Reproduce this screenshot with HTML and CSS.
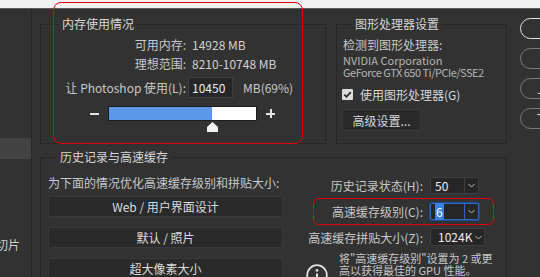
FILE: index.html
```html
<!DOCTYPE html>
<html lang="zh-CN">
<head>
  <meta charset="UTF-8" />
  <meta name="viewport" content="width=device-width, initial-scale=1.0" />
  <title>首选项 - 性能</title>
  <link rel="stylesheet" href="styles.css">
</head>
<body>
  <!-- window title strip -->
  <div class="topstrip"></div>

  <div class="dialog">
    <!-- category list (mostly scrolled off to the left) -->
    <aside class="sidebar">
      <div class="nav">
        <div class="nav-item"></div>
        <div class="nav-item"></div>
        <div class="nav-item"></div>
        <div class="nav-item"></div>
        <div class="nav-item"></div>
        <div class="nav-item"></div>
        <div class="nav-item"></div>
        <div class="nav-item active"></div>
        <div class="nav-item"></div>
        <div class="nav-item"></div>
        <div class="nav-item"></div>
        <div class="nav-item"></div>
        <div class="nav-item">切片</div>
        <div class="nav-item"></div>
      </div>
    </aside>

    <main class="prefs">
      <div class="top-row">
        <fieldset class="group memory">
          <legend>内存使用情况</legend>
          <div class="stats">
            <span class="label">可用内存:</span><span class="value">14928 MB</span>
            <span class="label">理想范围:</span><span class="value">8210-10748 MB</span>
          </div>
          <div class="use-row">
            <span class="label">让 Photoshop 使用(L):</span>
            <input class="num-input" type="text" value="10450" />
            <span class="unit">MB(69%)</span>
          </div>
          <div class="slider-row">
            <span class="minus"></span>
            <div class="slider-bar">
              <div class="slider-fill" style="width: 103px"></div>
              <svg class="slider-thumb" width="11" height="10" viewBox="0 0 11 10">
                <polygon points="5.5,0 11,5 11,10 0,10 0,5" fill="#f2f2f2" />
              </svg>
            </div>
            <span class="plus"></span>
          </div>
        </fieldset>

        <fieldset class="group gpu">
          <legend>图形处理器设置</legend>
          <div class="gpu-body">
            <div class="detected">检测到图形处理器:</div>
            <div class="gpu-name">NVIDIA Corporation</div>
            <div class="gpu-name model">GeForce GTX 650 Ti/PCIe/SSE2</div>
            <label class="check-row">
              <span class="checkbox">
                <svg width="11" height="11" viewBox="0 0 11 11">
                  <polyline points="2.3,5.6 4.5,7.8 8.8,3.2" fill="none" stroke="#2a2a2a" stroke-width="1.8" />
                </svg>
              </span>
              使用图形处理器(G)
            </label>
            <button class="adv-btn">高级设置...</button>
          </div>
        </fieldset>
      </div>

      <fieldset class="group history">
        <legend>历史记录与高速缓存</legend>
        <div class="history-body">
          <div class="opt-col">
            <div class="opt-title">为下面的情况优化高速缓存级别和拼贴大小:</div>
            <button class="opt-btn">Web / 用户界面设计</button>
            <button class="opt-btn">默认 / 照片</button>
            <button class="opt-btn">超大像素大小</button>
          </div>

          <div class="cache-col">
            <div class="cache-grid">
              <span class="label">历史记录状态(H):</span>
              <div class="select">
                <span class="select-value">50</span>
                <span class="select-arrow">
                  <svg width="7" height="5" viewBox="0 0 7 5"><polyline points="0.5,1 3.5,4 6.5,1" fill="none" stroke="#bdbdbd" stroke-width="1" /></svg>
                </span>
              </div>

              <span class="label">高速缓存级别(C):</span>
              <div class="select focused">
                <span class="select-value"><span class="selected-text">6</span></span>
                <span class="select-arrow">
                  <svg width="7" height="5" viewBox="0 0 7 5"><polyline points="0.5,1 3.5,4 6.5,1" fill="none" stroke="#bdbdbd" stroke-width="1" /></svg>
                </span>
              </div>

              <span class="label">高速缓存拼贴大小(Z):</span>
              <div class="select plain">
                <span class="select-value">1024K</span>
                <span class="select-arrow">
                  <svg width="7" height="5" viewBox="0 0 7 5"><polyline points="0.5,1 3.5,4 6.5,1" fill="none" stroke="#bdbdbd" stroke-width="1" /></svg>
                </span>
              </div>
            </div>

            <div class="note">
              <svg class="info-icon" width="22" height="22" viewBox="0 0 22 22">
                <circle cx="11" cy="11" r="9.8" fill="none" stroke="#e0e0e0" stroke-width="1.8" />
                <circle cx="11" cy="6.4" r="1.3" fill="#e0e0e0" />
                <line x1="11" y1="9.4" x2="11" y2="16.2" stroke="#e0e0e0" stroke-width="2" />
              </svg>
              <div class="note-text">
                <div class="note-line">将"高速缓存级别"设置为 2 或更</div>
                <div class="note-line">高以获得最佳的 GPU 性能。</div>
              </div>
            </div>
          </div>
        </div>
      </fieldset>
    </main>

    <div class="actions">
      <button class="pill default">确定</button>
      <button class="pill">复位</button>
      <button class="pill">上一个(P)</button>
      <button class="pill">下一个(N)</button>
    </div>
  </div>

  <!-- red annotation frames -->
  <div class="mark mark-memory"></div>
  <div class="mark mark-cache"></div>
</body>
</html>
```

FILE: styles.css
```css
body {
  margin: 0;
  width: 540px;
  height: 277px;
  overflow: hidden;
  position: relative;
  background: #323232;
  color: #c8c8c8;
  font-family: "Noto Sans CJK SC", "Noto Sans", sans-serif;
  font-size: 12px;
}

.topstrip {
  height: 8px;
  background: #f2f2f2;
  border-bottom: 1px solid #5c5c5c;
}

.dialog {
  display: flex;
  height: 268px;
}

/* left category list, only its right end is in view */
.sidebar {
  width: 31px;
  flex: none;
  overflow: hidden;
  border-right: 1px solid #272727;
}

.nav {
  margin-top: -4px;
}

.nav-item {
  display: flex;
  justify-content: flex-end;
  height: 19px;
  line-height: 19px;
  padding-right: 11px;
  white-space: nowrap;
  color: #d0d0d0;
}

.nav-item.active {
  height: 21px;
  background: #434343;
}

/* main settings area */
.prefs {
  width: 467px;
  flex: none;
  margin-left: 8px;
  padding-top: 7px;
}

.top-row {
  display: flex;
  gap: 10px;
}

.group {
  margin: 0;
  padding: 0;
  border: 1px solid #262626;
  box-sizing: border-box;
  min-width: 0;
}

.group legend {
  padding: 0 3px;
  line-height: 16px;
  color: #d6d6d6;
}

.memory {
  width: 286px;
  height: 128px;
}

.memory legend {
  margin-left: 18px;
}

.stats {
  display: grid;
  grid-template-columns: 145px auto;
  grid-auto-rows: 19px;
  align-items: center;
  padding-top: 3px;
}

.label {
  text-align: right;
  white-space: nowrap;
}

.value {
  padding-left: 6px;
  color: #d0d0d0;
}

.use-row {
  display: flex;
  align-items: center;
  height: 21px;
  margin-top: 4px;
}

.use-row .label {
  width: 145px;
}

.num-input {
  width: 45px;
  height: 21px;
  box-sizing: border-box;
  margin: 0 0 0 2px;
  padding: 0 0 0 3px;
  background: #262626;
  border: 1px solid #3e3e3e;
  color: #ececec;
  font-family: inherit;
  font-size: 12px;
}

.unit {
  margin-left: 10px;
}

.slider-row {
  display: flex;
  align-items: center;
  margin-top: 8px;
  padding-left: 49px;
}

.minus {
  width: 9px;
  height: 2px;
  background: #e2e2e2;
}

.slider-bar {
  position: relative;
  width: 149px;
  height: 15px;
  box-sizing: border-box;
  margin-left: 9px;
  background: #ffffff;
  border: 1px solid #1c1c1c;
}

.slider-fill {
  height: 100%;
  background: #5c97ea;
}

.slider-thumb {
  position: absolute;
  left: 98px;
  top: 15px;
}

.plus {
  position: relative;
  width: 9px;
  height: 9px;
  margin-left: 9px;
}

.plus::before,
.plus::after {
  content: "";
  position: absolute;
  background: #e2e2e2;
}

.plus::before {
  left: 0;
  top: 4px;
  width: 9px;
  height: 2px;
}

.plus::after {
  left: 4px;
  top: 0;
  width: 2px;
  height: 9px;
}

/* GPU box */
.gpu {
  width: 171px;
  height: 128px;
}

.gpu legend {
  margin-left: 15px;
}

.gpu-body {
  padding: 3px 0 0 6px;
}

.detected {
  line-height: 19px;
}

.gpu-name {
  height: 12px;
  font-size: 11px;
  line-height: 12px;
  color: #b4b4b4;
  white-space: nowrap;
}

.gpu-name:first-of-type {
  margin-top: 2px;
}

.gpu-name.model {
  letter-spacing: -0.5px;
}

.check-row {
  display: flex;
  align-items: center;
  height: 15px;
  margin-top: 9px;
  margin-left: -1px;
  color: #d6d6d6;
}

.checkbox {
  display: flex;
  width: 11px;
  height: 11px;
  margin-right: 7px;
  background: #dcdcdc;
  border-radius: 1px;
}

.adv-btn {
  display: block;
  width: 79px;
  height: 22px;
  margin-top: 7px;
  margin-left: -1px;
  padding: 0;
  background: #2a2a2a;
  border: 1px solid #3a3a3a;
  border-radius: 2px;
  color: #d6d6d6;
  font-family: inherit;
  font-size: 12px;
}

/* history and cache box */
.history {
  width: 467px;
  height: 140px;
  margin-top: 5px;
}

.history legend {
  margin-left: 16px;
}

.history-body {
  display: flex;
  padding: 9px 0 0 7px;
}

.opt-col {
  width: 235px;
  flex: none;
  display: flex;
  flex-direction: column;
  gap: 10px;
}

.opt-title {
  line-height: 18px;
  margin-bottom: -6px;
  white-space: nowrap;
}

.opt-btn {
  height: 21px;
  padding: 0;
  background: #2a2a2a;
  border: 1px solid #393939;
  border-radius: 2px;
  color: #dcdcdc;
  font-family: inherit;
  font-size: 12px;
}

.cache-col {
  margin-left: 17px;
  margin-top: -2px;
}

.cache-grid {
  display: grid;
  grid-template-columns: 123px auto;
  grid-auto-rows: 26px;
  column-gap: 7px;
  align-items: center;
}

.select {
  justify-self: start;
  display: flex;
  width: 49px;
  height: 17px;
  box-sizing: border-box;
  background: #262626;
  border: 1px solid #3f3f3f;
  border-radius: 2px;
  color: #ececec;
}

.select-value {
  flex: 1;
  padding-left: 4px;
  line-height: 15px;
}

.select-arrow {
  flex: none;
  display: flex;
  align-items: center;
  justify-content: center;
  width: 13px;
  border-left: 1px solid #3f3f3f;
}

.select.focused {
  border-color: #2c67c0;
  box-shadow: 0 0 0 1px #1d4c92;
}

.select.focused .select-arrow {
  border-left-color: #2c67c0;
}

.selected-text {
  background: #3b7fe0;
  color: #ffffff;
  padding: 0 1px;
}

.select.plain {
  width: 55px;
  height: 18px;
}

.select.plain .select-value {
  padding-left: 7px;
  line-height: 16px;
}

.select.plain .select-arrow {
  border-left: none;
  width: 12px;
}

.note {
  display: flex;
  margin-top: 2px;
}

.info-icon {
  flex: none;
  margin: 12px 0 0 6px;
}

.note-text {
  margin-left: 11px;
  font-size: 11px;
}

.note-line {
  height: 12px;
  line-height: 12px;
  white-space: nowrap;
}

/* right side buttons */
.actions {
  display: flex;
  flex-direction: column;
  gap: 9px;
  margin-left: 13px;
  padding-top: 9px;
}

.pill {
  width: 86px;
  height: 21px;
  padding: 0;
  background: #323232;
  border: 1px solid #7c7c7c;
  border-radius: 11px;
  color: #d6d6d6;
  font-family: inherit;
  font-size: 12px;
  white-space: nowrap;
}

.pill.default {
  border-color: #e4e4e4;
}

/* annotation frames */
.mark {
  position: absolute;
  border: 1px solid #e3000b;
}

.mark-memory {
  left: 53px;
  top: 2px;
  width: 248px;
  height: 140px;
  border-radius: 8px;
}

.mark-cache {
  left: 313px;
  top: 198px;
  width: 179px;
  height: 25px;
  border-radius: 6px;
}
```
